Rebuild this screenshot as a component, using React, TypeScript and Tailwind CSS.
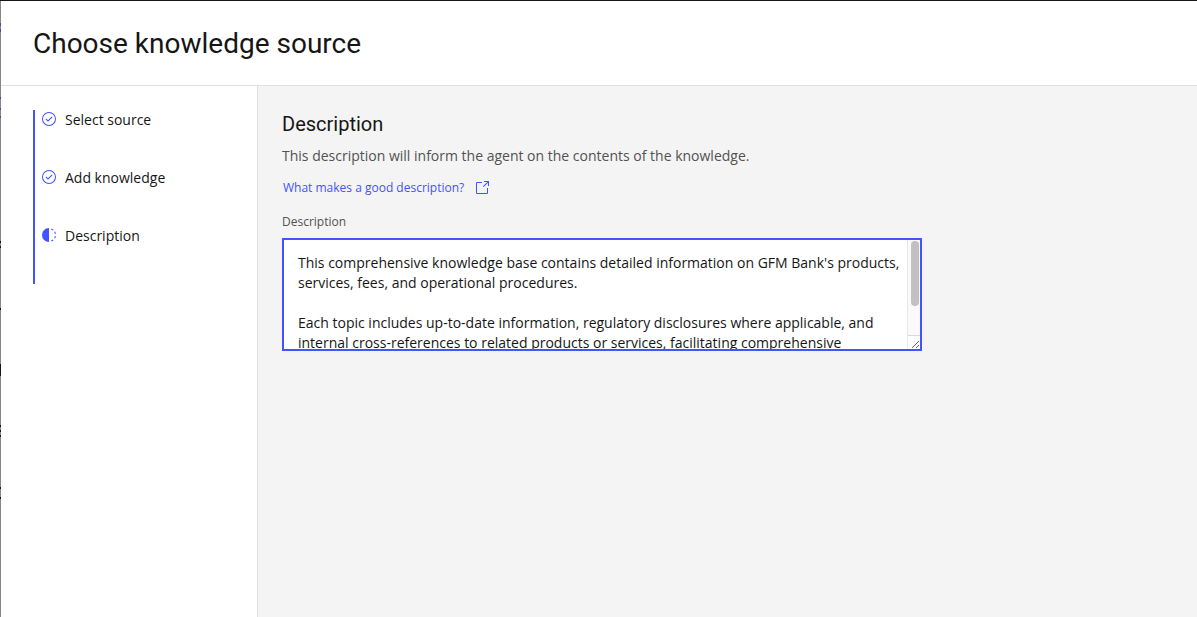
import React from "react";

const STEPS = [
  { label: "Select source", state: "complete" },
  { label: "Add knowledge", state: "complete" },
  { label: "Description", state: "current" },
] as const;

const DESCRIPTION = `This comprehensive knowledge base contains detailed information on GFM Bank's products, services, fees, and operational procedures.

Each topic includes up-to-date information, regulatory disclosures where applicable, and internal cross-references to related products or services, facilitating comprehensive understanding and accurate customer support.`;

function CompleteIcon() {
  return (
    <svg className="size-4 shrink-0" viewBox="0 0 32 32" fill="currentColor" aria-hidden="true">
      <path d="M14 21.414L9 16.413 10.413 15 14 18.586 21.585 11 23 12.415 14 21.414z" />
      <path d="M16,2A14,14,0,1,0,30,16,14,14,0,0,0,16,2Zm0,26A12,12,0,1,1,28,16,12,12,0,0,1,16,28Z" />
    </svg>
  );
}

function CurrentIcon() {
  return (
    <svg className="size-4 shrink-0" viewBox="0 0 32 32" fill="currentColor" aria-hidden="true">
      <path d="M23.7642 6.8593l1.2851-1.5315A13.976 13.976 0 0020.8672 2.887l-.6836 1.8776A11.9729 11.9729 0 0123.7642 6.8593zM27.81 14l1.9677-.4128A13.8888 13.8888 0 0028.14 9.0457L26.4087 10A12.52 12.52 0 0127.81 14zM20.1836 27.2354l.6836 1.8776a13.976 13.976 0 004.1821-2.4408l-1.2851-1.5315A11.9729 11.9729 0 0120.1836 27.2354zM26.4087 22L28.14 23a14.14 14.14 0 001.6382-4.5872L27.81 18.0659A12.1519 12.1519 0 0126.4087 22zM16 30V2a14 14 0 000 28z" />
    </svg>
  );
}

function LaunchIcon() {
  return (
    <svg className="size-4 shrink-0" viewBox="0 0 32 32" fill="currentColor" aria-hidden="true">
      <path d="M26,28H6a2.0027,2.0027,0,0,1-2-2V6A2.0027,2.0027,0,0,1,6,4H16V6H6V26H26V16h2V26A2.0027,2.0027,0,0,1,26,28Z" />
      <path d="M20 2 20 4 26.586 4 18 12.586 19.414 14 28 5.414 28 12 30 12 30 2z" />
    </svg>
  );
}

/* Sliver of the dimmed page that stays visible beside the dialog. */
function BackdropEdge() {
  return (
    <svg className="w-px shrink-0 bg-[#87878a]" aria-hidden="true">
      <g fill="#4a4aa0">
        <rect y="22" width="1" height="3" />
        <rect y="28" width="1" height="3" />
        <rect y="96" width="1" height="2" />
        <rect y="107" width="1" height="2" />
        <rect y="115" width="1" height="2" />
      </g>
      <g fill="#161616">
        <rect y="240" width="1" height="2" />
        <rect y="245" width="1" height="2" />
        <rect y="307" width="1" height="2" />
        <rect y="363" width="1" height="12" />
        <rect y="424" width="1" height="2" />
        <rect y="429" width="1" height="2" />
        <rect y="434" width="1" height="2" />
        <rect y="486" width="1" height="2" />
        <rect y="496" width="1" height="2" />
      </g>
    </svg>
  );
}

export default function App() {
  return (
    <div className="flex min-h-screen border-t border-[#161616] bg-white font-['Open_Sans',sans-serif] text-[#161616]">
      <BackdropEdge />
      <div className="flex grow flex-col">
        <header className="border-b border-[#e0e0e0] px-8 pt-[25px] pb-[23px]">
          <h1 className="font-['Roboto',sans-serif] text-[28px] leading-9">Choose knowledge source</h1>
        </header>
        <div className="flex grow">
          <nav aria-label="Progress" className="w-64 shrink-0 px-8 pt-6">
            <ol className="border-l-2 border-[#4353ff]">
              {STEPS.map((step) => (
                <li key={step.label}>
                  <button
                    type="button"
                    aria-current={step.state === "current" ? "step" : undefined}
                    className="flex h-[58px] w-full items-start gap-2 pl-1.5 text-left text-sm leading-5"
                  >
                    <span className="pt-px text-[#4353ff]">
                      {step.state === "complete" ? <CompleteIcon /> : <CurrentIcon />}
                    </span>
                    {step.label}
                  </button>
                </li>
              ))}
            </ol>
          </nav>
          <main className="grow border-l border-[#e0e0e0] bg-[#f4f4f4] p-6">
            <h2 className="font-['Roboto',sans-serif] text-xl leading-7">Description</h2>
            <p className="mt-2 text-sm leading-5 text-[#525252]">
              This description will inform the agent on the contents of the knowledge.
            </p>
            <a href="#help" className="mt-3.5 flex w-fit items-center gap-2.5 px-px text-xs leading-4 text-[#4353ff]">
              What makes a good description?
              <LaunchIcon />
            </a>
            <label htmlFor="description" className="mt-[18px] block text-xs leading-4 text-[#525252]">
              Description
            </label>
            <div className="relative mt-2 max-w-[640px]">
              <textarea
                id="description"
                defaultValue={DESCRIPTION}
                className="block h-[113px] w-full resize-y border-2 border-[#4353ff] bg-white py-[13px] pr-4 pl-3.5 text-sm leading-5 outline-none [scrollbar-width:none]"
              />
              <div
                aria-hidden="true"
                className="pointer-events-none absolute inset-y-0.5 right-0.5 flex w-[13px] flex-col border-l border-[#e8e8e8]"
              >
                <div className="grow bg-[#fafafa] pt-px pr-px pl-[3px]">
                  <div className="h-[65px] rounded-full bg-[#c1c1c1]" />
                </div>
                <div className="h-3.5 border-t border-[#d9d9d9]" />
              </div>
            </div>
          </main>
        </div>
      </div>
    </div>
  );
}
